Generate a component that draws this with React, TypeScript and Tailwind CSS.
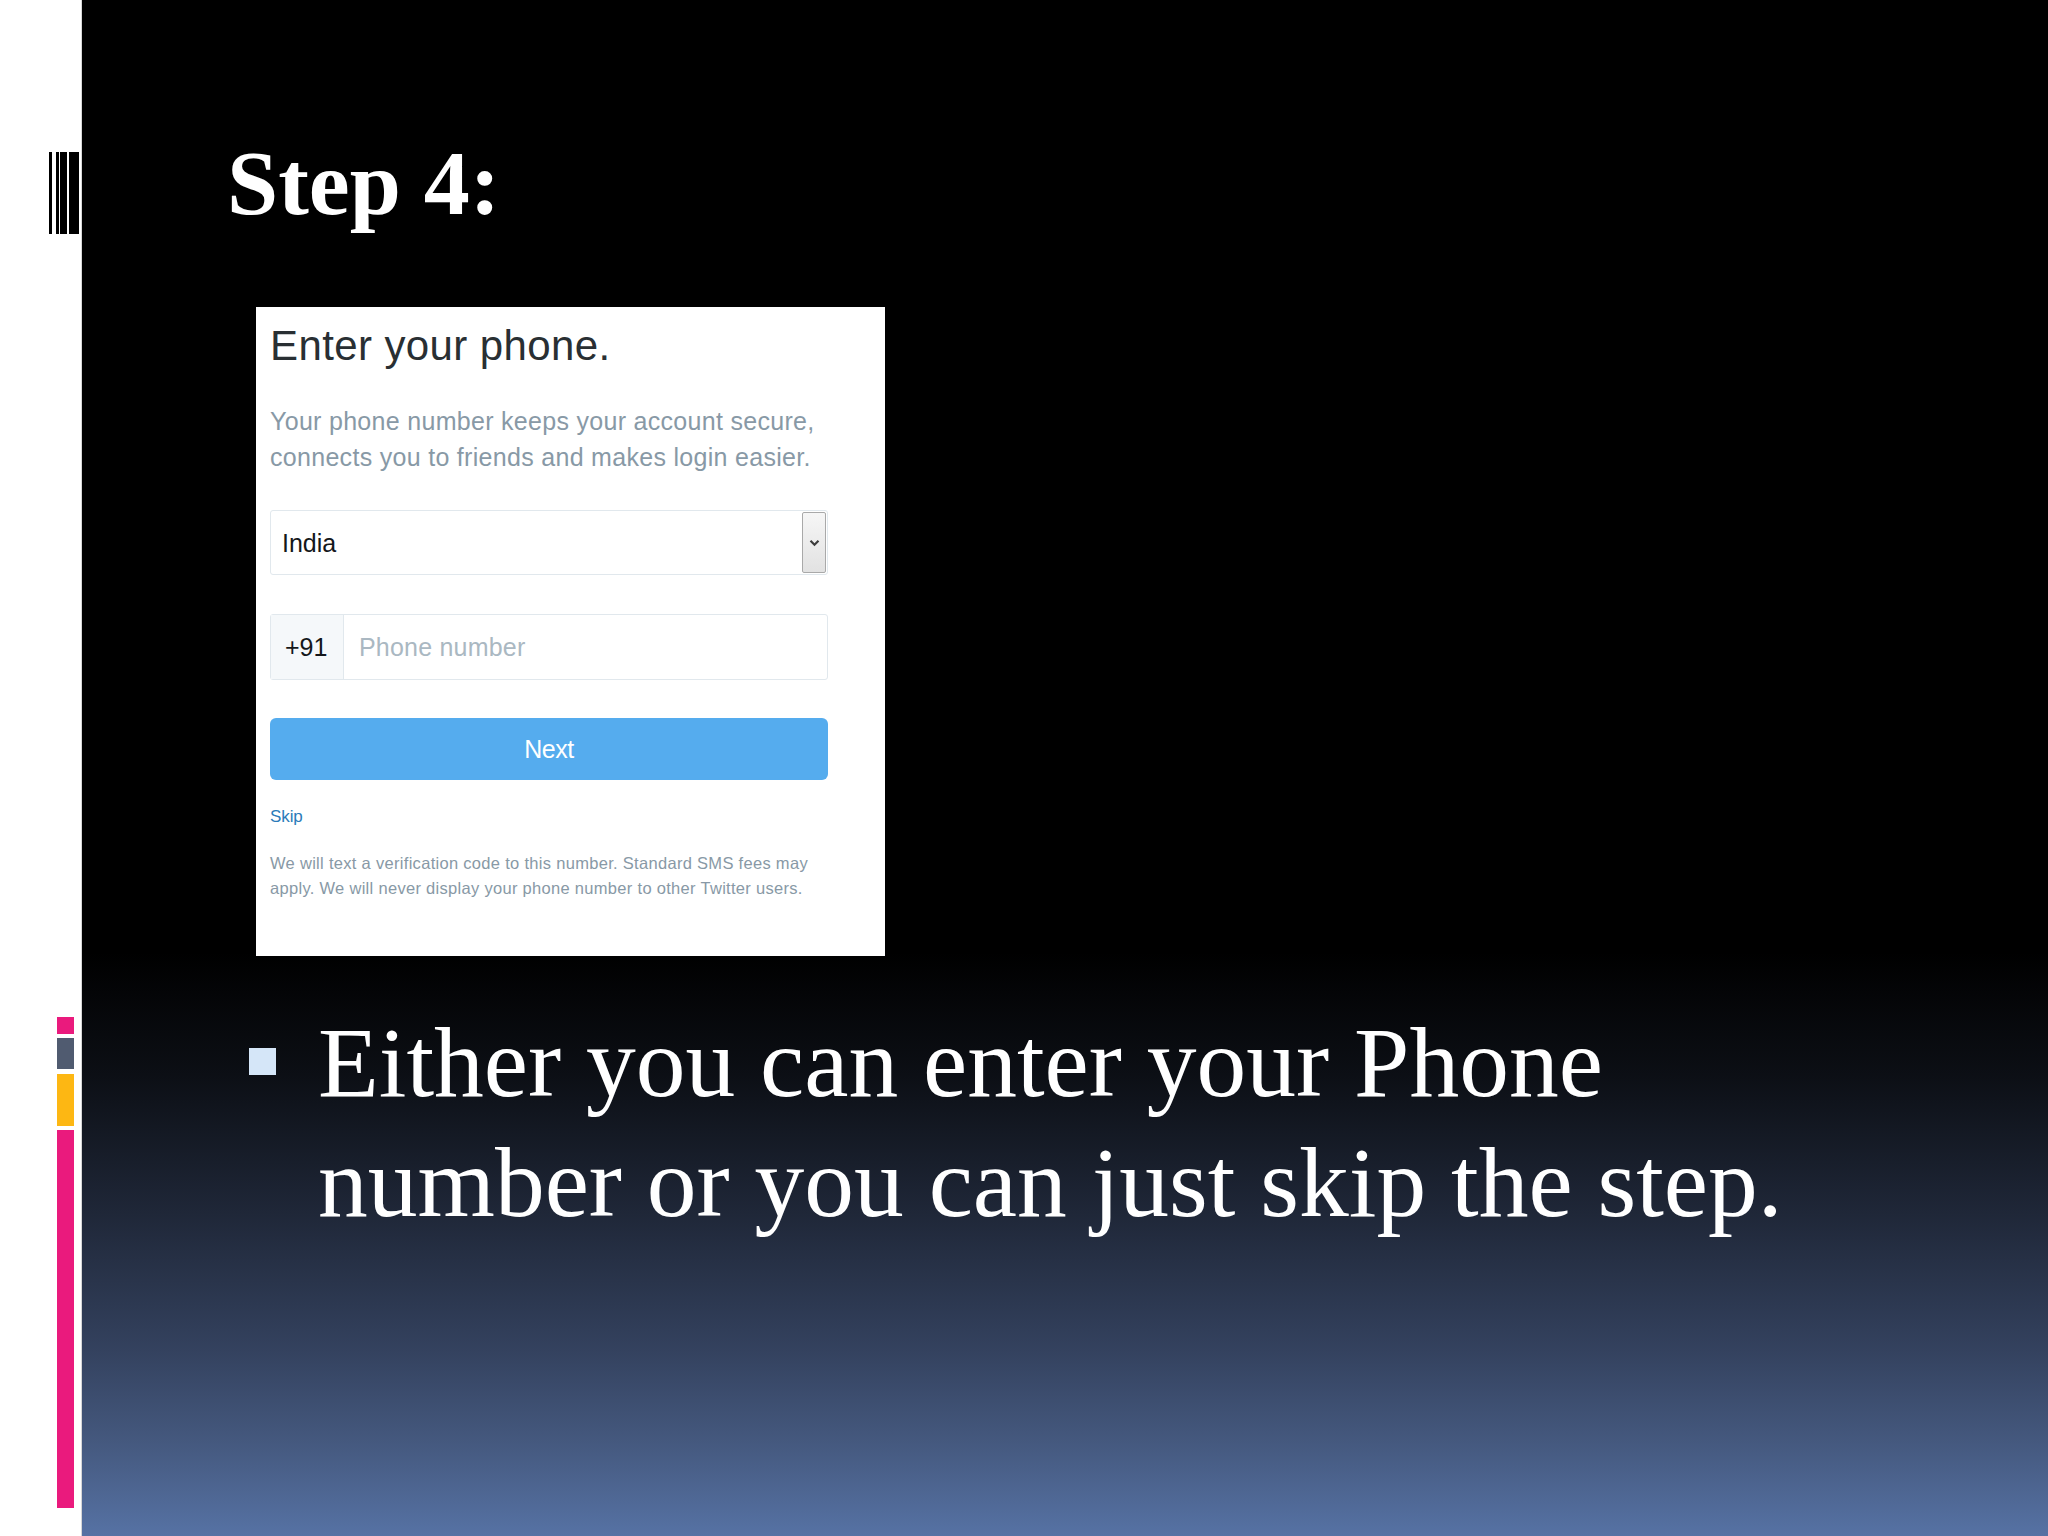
import React from 'react'

const serif = "font-['Liberation_Serif','Times_New_Roman',serif]"
const sans = "font-['Liberation_Sans',Arial,sans-serif]"

function SideStrip() {
  return (
    <aside className="w-[82px] shrink-0 bg-white border-r border-[#d6d6d6] flex flex-col">
      <div className="mt-[152px] ml-[49px] h-[82px] flex">
        <div className="w-[3px] bg-black" />
        <div className="w-[3px] ml-[4px] bg-black" />
        <div className="w-[7px] ml-[1px] bg-black" />
        <div className="w-[10px] ml-[2px] bg-black" />
      </div>
      <div className="mt-[783px] ml-[57px] w-[17px] flex flex-col">
        <div className="h-[17px] bg-[#ea1a7d]" />
        <div className="h-[31px] mt-[4px] bg-[#505b70]" />
        <div className="h-[52px] mt-[5px] bg-[#fdb713]" />
        <div className="h-[378px] mt-[4px] bg-[#ea1a7d]" />
      </div>
    </aside>
  )
}

function PhoneCard() {
  return (
    <div className={`w-[629px] h-[649px] bg-white pt-[15px] pl-[14px] ${sans}`}>
      <h2 className="text-[42px] leading-[48px] text-[#292f33] tracking-[0.4px]">Enter your phone.</h2>

      <p className="mt-[33px] w-[558px] text-[25px] leading-[36px] text-[#8899a6] tracking-[0.3px] whitespace-nowrap">
        Your phone number keeps your account secure,
        <br />
        connects you to friends and makes login easier.
      </p>

      <div className="mt-[35px] w-[558px] h-[65px] flex border border-[#e1e8ed] rounded-[3px] bg-white">
        <div className="flex-1 flex items-center pl-[11px] pt-[2px] text-[25px] text-[#14171a]">India</div>
        <div className="w-[24px] my-[1px] mr-[1px] flex items-center justify-center border border-[#a9a9a9] rounded-[2px] bg-gradient-to-b from-[#f6f6f6] to-[#e2e2e2]">
          <svg viewBox="0 0 12 9" className="w-[11px] h-[8px]">
            <path d="M1.5 2 L6 6.5 L10.5 2" fill="none" stroke="#3c3c3c" strokeWidth="2.4" />
          </svg>
        </div>
      </div>

      <div className="mt-[39px] w-[558px] h-[66px] flex border border-[#e1e8ed] rounded-[3px] bg-white">
        <div className="w-[73px] flex items-center pl-[14px] pt-[2px] bg-[#f5f8fa] border-r border-[#e1e8ed] text-[25px] text-[#14171a]">+91</div>
        <div className="flex-1 flex items-center pl-[15px] pt-[2px] text-[25px] text-[#aab8c2] tracking-[0.2px]">Phone number</div>
      </div>

      <div className="mt-[38px] w-[558px] h-[62px] pt-[2px] rounded-[6px] bg-[#55acee] flex items-center justify-center text-[25px] text-white tracking-[-0.5px]">
        Next
      </div>

      <div className="mt-[27px] text-[17px] leading-[20px] text-[#2b7bb9] tracking-[-0.1px]">Skip</div>

      <p className="mt-[24px] text-[16.5px] leading-[25px] text-[#8899a6] tracking-[0.3px] whitespace-nowrap">
        We will text a verification code to this number. Standard SMS fees may
        <br />
        apply. We will never display your phone number to other Twitter users.
      </p>
    </div>
  )
}

export default function App() {
  return (
    <div className="w-[2048px] h-[1536px] flex overflow-hidden">
      <SideStrip />
      <main className="flex-1 flex flex-col bg-[linear-gradient(to_bottom,#000_0%,#000_62%,#0c0f15_70%,#1f2738_79%,#34425f_88%,#45597f_94%,#5672a4_100%)]">
        <h1 className={`mt-[137px] ml-[145px] text-[92px] leading-[92px] font-bold text-white ${serif}`}>Step 4:</h1>

        <div className="mt-[78px] ml-[174px]">
          <PhoneCard />
        </div>

        <div className="mt-[47px] ml-[167px] flex">
          <div className="w-[27px] h-[27px] mt-[45px] bg-[#d5e6f8] shrink-0" />
          <p className={`ml-[42px] w-[1540px] text-[99.5px] leading-[120px] text-white ${serif}`}>
            Either you can enter your Phone number or you can just skip the step.
          </p>
        </div>
      </main>
    </div>
  )
}
